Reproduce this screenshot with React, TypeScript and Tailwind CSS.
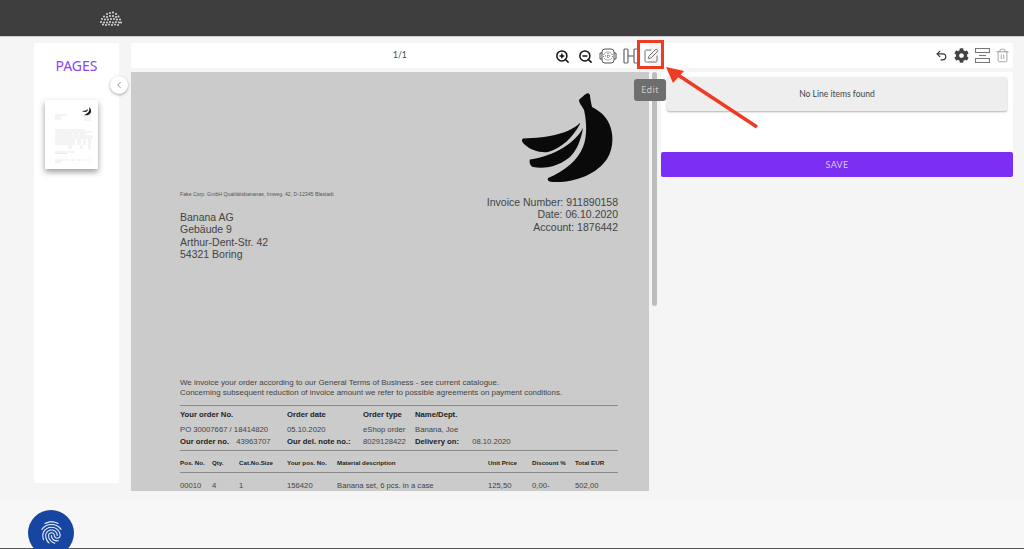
import { ChevronLeft, SquarePen, Trash2, Undo2, ZoomIn, ZoomOut } from 'lucide-react'
import { FaCog } from 'react-icons/fa'
import { MdFingerprint } from 'react-icons/md'

const dots = [
  [107, 14], [110, 13], [113, 12.5], [116, 14],
  [104, 16.5], [107, 17], [110, 16], [113, 16], [116, 17], [118.5, 16.5],
  [102, 19], [105, 19.5], [108, 19.5], [111, 19], [114, 19], [117, 19.5], [120, 19.5],
  [101, 22], [104, 22.5], [107, 22.5], [110, 22], [113, 22.5], [116, 22], [119, 22.5], [121, 22.5],
  [103, 24.5], [106, 25], [109, 24.5], [112, 25], [115, 24.5], [118, 25],
]

const BrainIcon = () => (
  <svg width="18" height="16" viewBox="0 0 18 16" fill="none" stroke="#555" strokeWidth="1" className="ml-[6px]">
    <rect x="3" y="1" width="12" height="14" rx="3" />
    <path d="M3 5H1v6h2M15 5h2v6h-2" />
    <ellipse cx="9" cy="8" rx="4.5" ry="4" strokeDasharray="1 1" />
    <path d="M6 8h6M9 5v6" strokeDasharray="1 1" />
  </svg>
)

const ColumnsIcon = () => (
  <svg width="16" height="16" viewBox="0 0 16 16" fill="none" stroke="#666" strokeWidth="1.2" className="ml-[6px]">
    <rect x="1" y="1" width="4" height="14" rx="1" />
    <rect x="11" y="1" width="4" height="14" rx="1" />
    <path d="M5 8h6" />
  </svg>
)

const SplitIcon = () => (
  <svg width="15" height="15" viewBox="0 0 15 15" fill="none" stroke="#777" strokeWidth="1.1" className="ml-[6px]">
    <rect x="0.5" y="0.5" width="14" height="4" />
    <rect x="0.5" y="10.5" width="14" height="4" />
    <path d="M4 7.5h7" />
  </svg>
)

const Banana = () => (
  <svg width="91" height="90" viewBox="522 93 91 90" fill="#0a0a0a">
    <path d="M586 94 C584 95 581 98 579 100 C579 103 582 106 584 110 C586 118 588 135 583 147 C578 160 565 171 548 178 C547 181 549 182 553 182 C575 183 597 174 607 159 C615 146 614 128 605 117 C601 112 596 109 592 107 C591 102 590 98 590 95 C589 93 587 93 586 94 Z" />
    <path d="M583 128 C576 142 555 156 530 159.5 C529 162 530 166 533 167 C547 170 562 164 570 157 C577 150 581 140 583 128 Z" />
    <path d="M580 123 C570 133 549 138 523 138.5 C521 140 522 142 524 144 C530 150 540 153 548 152 C562 148 573 137 580 124 Z" />
  </svg>
)

const Thumb = () => (
  <svg width="53" height="69" viewBox="0 0 53 69" className="block">
    <path d="M44 7 C45 10 44 13 39 15 C43 16 47 14 46 10 C46 9 45 8 44 7 Z M37 11 C40 11 42 10 43 9 C43 12 40 13 37 11 Z" fill="#222" />
    <g stroke="#c8c8c8" strokeWidth="0.4">
      <path d="M10 15h12M10 17h6M10 19h6M36 16h10M39 18h7M39 20h7" />
      <path d="M10 30h30M10 32h37" />
      <path d="M10 34h12M21 34h6M28 34h6M35 34h6M10 36h38M10 38h38" />
      <path d="M10 40h20M32 40h4M38 40h3M43 40h3M10 42h20M32 42h4M38 42h3M43 42h3M10 44h20M32 44h4M38 44h3M43 44h3" />
      <path d="M23 46h4M35 46h3M43 46h3M23 48h4M35 48h3M43 48h3" />
      <path d="M10 52h20M10 53.5h12M10 60h8M20 60h4M26 60h4M32 60h4M37 60h3M42 60h3M10 62h6" />
    </g>
  </svg>
)

export default function App() {
  return (
    <div className="relative h-[549px] w-[1024px] overflow-hidden bg-[#f5f5f5] font-['Lato',sans-serif]">
      {/* Top bar */}
      <header className="h-[37px] border-b border-[#c9c9c9] bg-[#3e3e3e]">
        <svg width="1024" height="36" className="block">
          {dots.map(([x, y], i) => (
            <circle key={i} cx={x} cy={y} r="1" fill="#ddd" />
          ))}
        </svg>
      </header>

      <div className="flex h-[463px] items-start pt-[6px]">
        {/* Pages */}
        <aside className="relative ml-[34px] flex h-[440px] w-[85px] flex-col items-center bg-white">
          <h2 className="mt-[13px] font-['Noto_Sans',sans-serif] text-[14px] leading-[19px] text-[#8c44f7]">PAGES</h2>
          <div className="ml-[11px] mt-[25px] h-[69px] w-[53px] self-start bg-white shadow-[0_3px_6px_rgba(0,0,0,0.4)]">
            <Thumb />
          </div>
          <button className="absolute left-[76px] top-[33px] flex h-[18px] w-[18px] items-center justify-center rounded-full bg-white shadow-[0_1px_3px_rgba(0,0,0,0.35)]">
            <ChevronLeft size={10} color="#777" />
          </button>
        </aside>

        {/* Document */}
        <section className="ml-[12px] w-[518px]">
          <div className="flex h-[25px] items-center bg-white pl-[262px]">
            <span className="w-[14px] text-[8.5px] text-[#444]">1/1</span>
            <div className="ml-[148px] mt-[1px] flex items-center">
              <ZoomIn size={15} color="#111" strokeWidth={2.4} />
              <ZoomOut size={15} color="#111" strokeWidth={2.4} className="ml-[8px]" />
              <BrainIcon />
              <ColumnsIcon />
              <SquarePen size={16} color="#666" strokeWidth={1.4} className="ml-[4px]" />
            </div>
          </div>
          <div className="mt-[4px] h-[419px] overflow-hidden bg-[#cbcbcb] pl-[49px] pr-[31px] pt-[21px] font-['Liberation_Sans',sans-serif] text-[#444]">
            <div className="flex justify-end pr-[5px]">
              <Banana />
            </div>
            <div className="mt-[7px] flex justify-between">
              <div>
                <p className="h-[8px] whitespace-nowrap text-[5.2px] leading-[8px] text-[#555]">
                  Fake Corp. GmbH Qualitätsbananas, Imweg. 42, D-12345 Blastadt
                </p>
                <div className="mt-[13px] text-[10.5px] leading-[12.4px]">
                  <p>Banana AG</p>
                  <p>Gebäude 9</p>
                  <p>Arthur-Dent-Str. 42</p>
                  <p>54321 Boring</p>
                </div>
              </div>
              <div className="pt-[6px] text-right text-[10.5px] leading-[12.4px]">
                <p>Invoice Number: 911890158</p>
                <p>Date: 06.10.2020</p>
                <p>Account: 1876442</p>
              </div>
            </div>
            <div className="mt-[117px] whitespace-nowrap text-[7.95px] leading-[10px]">
              <p>We invoice your order according to our General Terms of Business - see current catalogue.</p>
              <p>Concerning subsequent reduction of invoice amount we refer to possible agreements on payment conditions.</p>
            </div>
            <div className="mt-[7px] border-t border-[#8a8a8a] text-[7.7px] leading-[12px]">
              <div className="mt-[3px] grid grid-cols-[107px_76px_52px_1fr] font-bold text-[#222]">
                <span>Your order No.</span>
                <span>Order date</span>
                <span>Order type</span>
                <span>Name/Dept.</span>
              </div>
              <div className="mt-[3px] grid grid-cols-[107px_76px_52px_1fr]">
                <span>PO 30007667 / 18414820</span>
                <span>05.10.2020</span>
                <span>eShop order</span>
                <span>Banana, Joe</span>
              </div>
              <div className="grid grid-cols-[107px_76px_52px_1fr]">
                <span>
                  <b className="text-[#222]">Our order no.</b> <span className="ml-[5px]">43963707</span>
                </span>
                <span className="whitespace-nowrap font-bold text-[#222]">Our del. note no.:</span>
                <span>8029128422</span>
                <span className="whitespace-nowrap">
                  <b className="text-[#222]">Delivery on:</b> <span className="ml-[11px]">08.10.2020</span>
                </span>
              </div>
            </div>
            <div className="mt-[2px] border-y border-[#8a8a8a] pb-[3px] pt-[6px]">
              <div className="grid grid-cols-[32px_27px_48px_50px_151px_44px_43px_1fr] text-[6.2px] font-bold leading-[12px] text-[#222]">
                <span>Pos. No.</span>
                <span>Qty.</span>
                <span>Cat.No.Size</span>
                <span>Your pos. No.</span>
                <span>Material description</span>
                <span>Unit Price</span>
                <span>Discount %</span>
                <span>Total EUR</span>
              </div>
            </div>
            <div className="mt-[7px] grid grid-cols-[32px_27px_48px_50px_151px_44px_43px_1fr] text-[7.7px] leading-[12px]">
              <span>00010</span>
              <span>4</span>
              <span>1</span>
              <span>156420</span>
              <span className="whitespace-nowrap">Banana set, 6 pcs. in a case</span>
              <span>125,50</span>
              <span>0,00-</span>
              <span>502,00</span>
            </div>
          </div>
        </section>

        <div className="ml-[3px] mt-[29px] h-[234px] w-[5px] rounded-full bg-[#bdbdbd]" />

        {/* Line items */}
        <section className="ml-[4px] w-[352px]">
          <div className="flex h-[25px] items-center justify-end bg-white pr-[3px]">
            <Undo2 size={13} color="#333" strokeWidth={2} />
            <FaCog size={15} color="#444" className="ml-[6px]" />
            <SplitIcon />
            <Trash2 size={15} color="#888" strokeWidth={1.2} className="ml-[5px]" />
          </div>
          <div className="mt-[4px] h-[80px] bg-white pl-[6px] pr-[6px] pt-[5px]">
            <div className="flex h-[34px] items-center justify-center rounded-[2px] bg-[#eeeeee] text-[8.5px] text-[#444] shadow-[0_1px_2px_rgba(0,0,0,0.3)]">
              No Line items found
            </div>
          </div>
          <button className="block h-[25px] w-full rounded-[2px] bg-[#7b2ff2] text-[9px] tracking-[0.3px] text-[#d9c8fb]">
            SAVE
          </button>
        </section>
      </div>

      {/* Footer */}
      <footer className="h-[49px] border-b border-[#555] bg-[#f7f7f7] pl-[28px] pt-[10px]">
        <div className="relative z-10 flex h-[46px] w-[46px] items-center justify-center rounded-full bg-[#1746a2] pb-[2px]">
          <MdFingerprint size={27} color="#e8eefb" />
        </div>
      </footer>

      {/* Annotation */}
      <div className="absolute left-[637px] top-[40px] h-[29px] w-[27px] border-[3px] border-[#ee3b23]" />
      <div className="absolute left-[634px] top-[79px] flex h-[22px] w-[32px] items-center justify-center rounded-[3px] bg-[#6e6e6e] font-['Noto_Sans',sans-serif] text-[9px] tracking-[0.4px] text-[#ccc]">
        Edit
      </div>
      <svg width="1024" height="549" className="pointer-events-none absolute left-0 top-0">
        <path d="M757 127 L678 75" stroke="#ee3b23" strokeWidth="3.5" />
        <path d="M666 67 L684 71 L673 83 Z" fill="#ee3b23" />
      </svg>
    </div>
  )
}
